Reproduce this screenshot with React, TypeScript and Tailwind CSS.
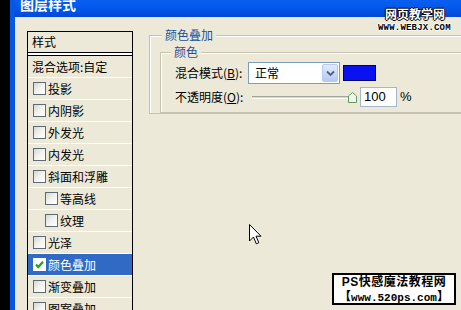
import React from "react";

const effects = [
  { name: "投影" },
  { name: "内阴影" },
  { name: "外发光" },
  { name: "内发光" },
  { name: "斜面和浮雕" },
  { name: "等高线", sub: true },
  { name: "纹理", sub: true },
  { name: "光泽" },
  { name: "颜色叠加", checked: true },
  { name: "渐变叠加" },
  { name: "图案叠加" },
];

function CheckBox({ checked }: { checked?: boolean }) {
  return (
    <span
      className={
        checked
          ? "flex h-[13px] w-[13px] shrink-0 items-center justify-center border border-white bg-white"
          : "h-[13px] w-[13px] shrink-0 border border-[#5E6A78] bg-gradient-to-br from-[#D8D8D2] via-[#F2F2EE] to-white"
      }
    >
      {checked && (
        <svg width="11" height="11" viewBox="0 0 11 11">
          <path d="M2 5.5 L4.3 8 L9 2.8" fill="none" stroke="#21A121" strokeWidth="2.2" />
        </svg>
      )}
    </span>
  );
}

function StyleList() {
  return (
    <div className="mt-[4px] h-[300px] w-[106px] shrink-0 border-x border-t border-black">
      <div className="flex h-[21px] items-center border-b border-black pl-[4px]">样式</div>
      <div className="h-[2px] bg-white" />
      <div className="flex h-[23px] items-center border-t border-b border-t-black border-b-white pl-[4px]">
        混合选项:自定
      </div>
      {effects.map((e) => (
        <div
          key={e.name}
          className={
            (e.checked ? "bg-[#316AC5] text-white " : "") +
            (e.sub ? "pl-[17px] " : "pl-[5px] ") +
            "flex h-[22px] items-center gap-[2px] border-b border-white"
          }
        >
          <CheckBox checked={e.checked} />
          <span>{e.name}</span>
        </div>
      ))}
    </div>
  );
}

function Chevron() {
  return (
    <svg width="9" height="7" viewBox="0 0 9 7">
      <path d="M1 1.5 L4.5 5 L8 1.5" fill="none" stroke="#4D6185" strokeWidth="1.8" />
    </svg>
  );
}

function ColorOverlay() {
  return (
    <fieldset className="w-[420px] border border-[#C5C2B2] pt-[1px] pl-[10px] shadow-[inset_1px_1px_0_#fff]">
      <legend className="ml-[2px] bg-[#ECE9D8] px-[3px] leading-[16px] text-[#1F4E9E]">颜色叠加</legend>
      <fieldset className="border border-[#C5C2B2] pt-[2px] pb-[5px] pl-[14px] shadow-[inset_1px_1px_0_#fff]">
        <legend className="-ml-[4px] bg-[#ECE9D8] px-[3px] leading-[16px] text-[#1F4E9E]">颜色</legend>
        <div className="flex items-center">
          <span className="w-[73px]">
            混合模式(<span className="underline">B</span>):
          </span>
          <div className="flex h-[22px] w-[92px] items-center border border-[#7F9DB9] bg-white">
            <span className="flex-1 pl-[6px]">正常</span>
            <span className="mr-[1px] flex h-[18px] w-[16px] items-center justify-center rounded-[2px] border border-[#B7C9F1] bg-gradient-to-b from-[#E3ECFE] to-[#B4C8F5]">
              <Chevron />
            </span>
          </div>
          <span className="ml-[3px] h-[16px] w-[33px] border border-[#00006A] bg-[#0A12F2]" />
        </div>
        <div className="mt-[3px] flex items-center">
          <span className="w-[73px]">
            不透明度(<span className="underline">O</span>):
          </span>
          <div className="flex w-[109px] items-center pl-[4px]">
            <span className="h-[3px] flex-1 border-t border-b border-t-[#A7A595] border-b-white bg-[#DCD9C8]" />
            <svg className="-ml-[3px]" width="9" height="11" viewBox="0 0 9 11">
              <path d="M0.5 10.5 V4 L4.5 0.5 L8.5 4 V10.5 Z" fill="#F4F4EE" stroke="#5E9C58" />
            </svg>
          </div>
          <div className="ml-[3px] flex h-[20px] w-[37px] items-center border border-[#A5B6C8] bg-white pl-[3px] font-['Liberation_Sans',sans-serif] text-[13px]">
            100
          </div>
          <span className="ml-[3px] font-['Liberation_Sans',sans-serif] text-[13px]">%</span>
        </div>
      </fieldset>
    </fieldset>
  );
}

export default function App() {
  return (
    <div className="relative flex h-[310px] w-[461px] overflow-hidden bg-black font-['Noto_Sans_CJK_SC',sans-serif] text-[12px] text-black">
      <div className="w-[10px] shrink-0 bg-black" />
      <div className="flex flex-1 flex-col border-l-[5px] border-[#0A56E4] bg-[#ECE9D8]">
        <div className="h-[17px] shrink-0 overflow-hidden bg-gradient-to-b from-[#0A5FEF] via-[#0058EC] to-[#0049D6] pl-[5px]">
          <div className="-mt-[4px] text-[14px] leading-[16px] font-bold text-white">图层样式</div>
        </div>
        <div className="flex flex-1 pl-[12px] pt-[10px]">
          <StyleList />
          <div className="ml-[16px]">
            <ColorOverlay />
          </div>
        </div>
      </div>

      {/* watermarks */}
      <div className="absolute top-[7px] left-[385px] text-[12px] leading-[14px] font-bold text-white [text-shadow:1px_0_0_#000,-1px_0_0_#000,0_1px_0_#000,0_-1px_0_#000]">
        网页教学网
      </div>
      <div className="absolute top-[23px] left-[378px] font-['Liberation_Mono',monospace] text-[9px] leading-[10px] font-bold tracking-[0.2px] text-black [text-shadow:1px_0_0_#fff,-1px_0_0_#fff,0_1px_0_#fff,0_-1px_0_#fff]">
        WWW.WEBJX.COM
      </div>
      <div className="absolute top-[273px] left-[332px] flex h-[32px] w-[124px] flex-col items-center justify-center border-2 border-black bg-white text-[12px] leading-[14px] font-bold">
        <span className="tracking-[0.5px]">
          <span className="font-['Liberation_Sans',sans-serif]">PS</span>快感魔法教程网
        </span>
        <span>
          【<span className="font-['Liberation_Mono',monospace] text-[11px]">www.520ps.com</span>】
        </span>
      </div>

      {/* mouse cursor */}
      <svg className="absolute top-[224px] left-[249px]" width="13" height="21" viewBox="0 0 13 21">
        <path d="M0.5 0.5 V17 L4.5 13 L7.3 19.8 L9.8 18.7 L7 12.2 H12 Z" fill="#fff" stroke="#000" />
      </svg>
    </div>
  );
}
